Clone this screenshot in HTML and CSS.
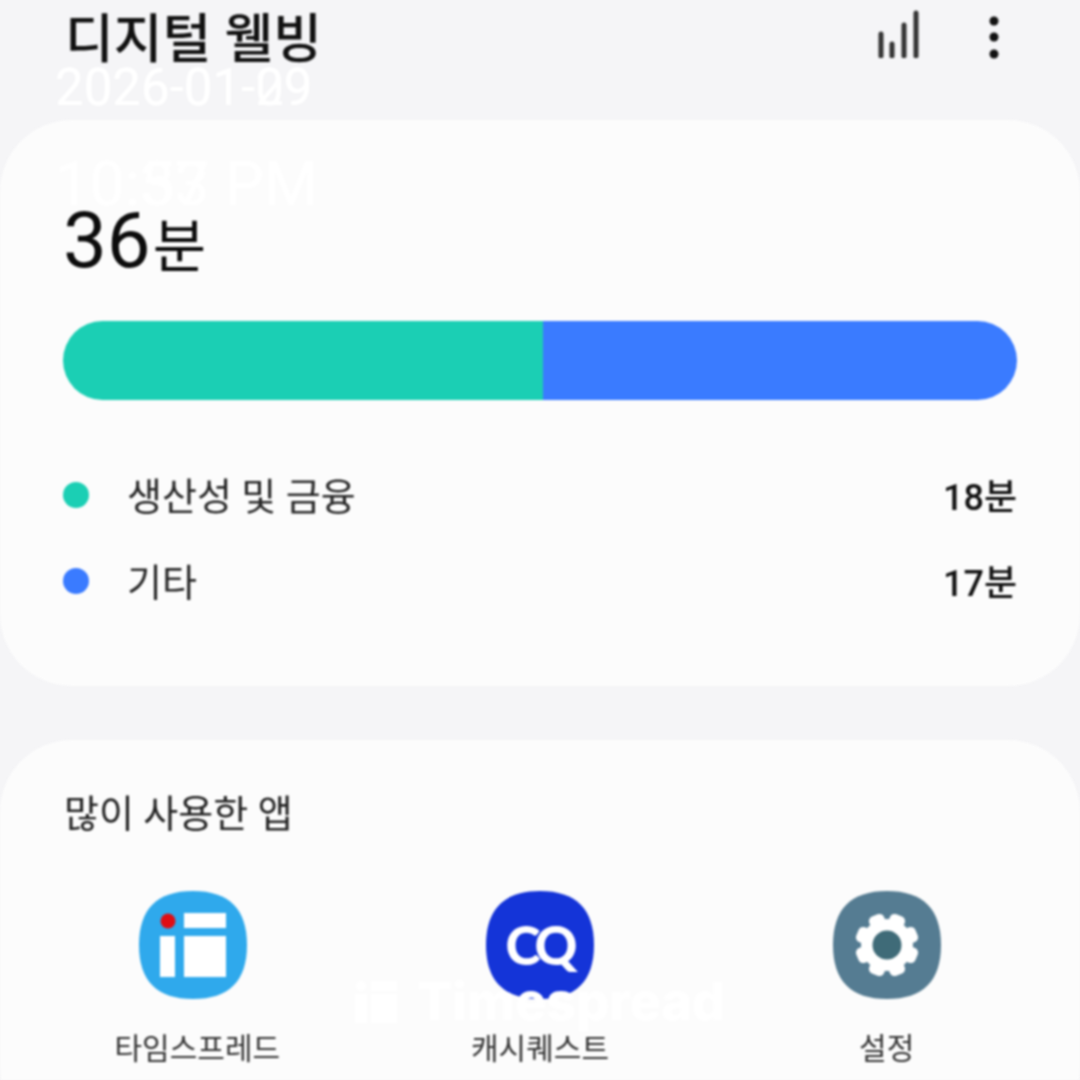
FILE: index.html
```html
<!DOCTYPE html>
<html lang="ko">
<head>
  <meta charset="UTF-8" />
  <meta name="viewport" content="width=device-width, initial-scale=1.0" />
  <title>디지털 웰빙</title>
  <link rel="stylesheet" href="styles.css">
</head>
<body>
  <div class="page">
    <!-- 상단 바 -->
    <header class="top-bar">
      <h1>디지털 웰빙</h1>
      <div class="top-icons">
        <svg class="icon-signal" width="44" height="50" viewBox="0 0 44 50">
          <line x1="5" y1="26" x2="5" y2="48" />
          <line x1="16" y1="36" x2="16" y2="48" />
          <line x1="28" y1="17" x2="28" y2="48" />
          <line x1="40" y1="5" x2="40" y2="48" />
        </svg>
        <svg class="icon-more" width="10" height="44" viewBox="0 0 10 44">
          <circle cx="5" cy="5" r="4.5" />
          <circle cx="5" cy="21" r="4.5" />
          <circle cx="5" cy="38" r="4.5" />
        </svg>
      </div>
    </header>

    <!-- 사용 시간 -->
    <section class="card usage-card">
      <div class="total"><span class="total-num">36</span><span class="total-unit">분</span></div>
      <div class="bar">
        <div class="bar-green"></div>
        <div class="bar-blue"></div>
      </div>
      <ul class="legend">
        <li><i class="dot dot-green"></i><span class="legend-name">생산성 및 금융</span><b class="legend-time">18분</b></li>
        <li><i class="dot dot-blue"></i><span class="legend-name">기타</span><b class="legend-time">17분</b></li>
      </ul>
    </section>

    <!-- 많이 사용한 앱 -->
    <section class="card apps-card">
      <h2>많이 사용한 앱</h2>
      <div class="apps">
        <div class="app">
          <svg width="108" height="108" viewBox="0 0 108 108">
            <path fill="#2fa9ec" d="M54 0C90 0 108 18 108 54S90 108 54 108 0 90 0 54 18 0 54 0Z" />
            <rect fill="#fff" x="45" y="22" width="42" height="15" />
            <rect fill="#fff" x="45" y="45" width="42" height="41" />
            <rect fill="#fff" x="21" y="45" width="15" height="41" />
            <circle fill="#e00d14" cx="29" cy="30" r="7.5" />
          </svg>
          <span class="app-shift">타임스프레드</span>
        </div>
        <div class="app">
          <div class="cq-icon">
            <svg width="108" height="108" viewBox="0 0 108 108">
              <path fill="#1434d8" d="M54 0C90 0 108 18 108 54S90 108 54 108 0 90 0 54 18 0 54 0Z" />
            </svg>
            <span class="cq-text">CQ</span>
          </div>
          <span>캐시퀘스트</span>
        </div>
        <div class="app">
          <svg width="108" height="108" viewBox="0 0 108 108">
            <path fill="#557c92" d="M54 0C90 0 108 18 108 54S90 108 54 108 0 90 0 54 18 0 54 0Z" />
            <g fill="#fff">
              <rect x="46" y="22" width="16" height="64" rx="5" transform="rotate(22.5 54 54)" />
              <rect x="46" y="22" width="16" height="64" rx="5" transform="rotate(67.5 54 54)" />
              <rect x="46" y="22" width="16" height="64" rx="5" transform="rotate(112.5 54 54)" />
              <rect x="46" y="22" width="16" height="64" rx="5" transform="rotate(157.5 54 54)" />
              <circle cx="54" cy="54" r="26" />
            </g>
            <circle fill="#3f6b78" cx="54" cy="54" r="14.5" />
          </svg>
          <span>설정</span>
        </div>
      </div>
    </section>

    <!-- 워터마크 -->
    <div class="stamp stamp-date">2026-01-09<span class="ghost">2026-01-29</span></div>
    <div class="stamp stamp-time">10:53 PM<span class="ghost">10:37 PM</span></div>
    <div class="stamp stamp-logo">
      <svg width="42" height="42" viewBox="0 0 42 42">
        <rect x="0" y="13" width="12" height="29" />
        <circle cx="6" cy="5" r="5" />
        <rect x="16" y="0" width="26" height="10" />
        <rect x="16" y="13" width="26" height="29" />
      </svg>
      Timespread
    </div>
  </div>
</body>
</html>
```

FILE: styles.css
```css
* {
  box-sizing: border-box;
}

body {
  margin: 0;
  font-family: Roboto, "Noto Sans CJK KR", sans-serif;
  background-color: #f5f5f7;
  color: #1c1c1c;
}

.page {
  position: relative;
  width: 1080px;
  height: 1080px;
  overflow: hidden;
  filter: blur(0.8px);
}

.top-bar {
  height: 120px;
  padding: 0 81px 0 65px;
  display: flex;
  justify-content: space-between;
  align-items: flex-start;
}

h1 {
  margin: 10px 0 0;
  font-size: 53px;
  line-height: 60px;
  font-weight: 500;
  color: #111;
}

.top-icons {
  display: flex;
  align-items: flex-start;
  gap: 69px;
  padding-top: 8px;
}

.icon-signal line {
  stroke: #333;
  stroke-width: 5;
  stroke-linecap: round;
}

.icon-more {
  margin-top: 8px;
  fill: #111;
}

.card {
  background-color: #fcfcfc;
  border-radius: 72px;
}

.usage-card {
  height: 566px;
  padding: 82px 63px 0;
  margin-bottom: 54px;
}

.total {
  height: 78px;
  display: flex;
  align-items: baseline;
  color: #0c0c0c;
}

.total-num {
  font-size: 78px;
  line-height: 78px;
}

.total-unit {
  font-size: 58px;
  line-height: 78px;
  margin-left: 2px;
}

.bar {
  display: flex;
  height: 79px;
  margin-top: 41px;
  border-radius: 40px;
  overflow: hidden;
}

.bar-green {
  flex: 480;
  background-color: #1bcfb4;
}

.bar-blue {
  flex: 474;
  background-color: #3a7bff;
}

.legend {
  list-style: none;
  margin: 52px 0 0;
  padding: 0;
}

.legend li {
  height: 86px;
  display: flex;
  align-items: center;
}

.dot {
  width: 26px;
  height: 26px;
  border-radius: 50%;
  margin-right: 38px;
}

.dot-green {
  background-color: #1bcfb4;
}

.dot-blue {
  background-color: #3a7bff;
}

.legend-name {
  flex: 1;
  margin-top: -3px;
  font-size: 38px;
  color: #262626;
}

.legend-time {
  margin-top: -3px;
  font-size: 36px;
  font-weight: 500;
  color: #111;
}

.apps-card {
  height: 400px;
  padding: 48px 20px 0;
}

h2 {
  margin: 0 0 0 44px;
  font-size: 38px;
  line-height: 52px;
  font-weight: 400;
  color: #222;
}

.apps {
  display: grid;
  grid-template-columns: repeat(3, 1fr);
  margin-top: 51px;
}

.app {
  display: flex;
  flex-direction: column;
  align-items: center;
  gap: 28px;
  font-size: 30px;
  line-height: 44px;
  color: #333;
}

.app-shift {
  margin-left: 8px;
}

.cq-icon {
  position: relative;
  width: 108px;
  height: 108px;
}

.cq-text {
  position: absolute;
  left: -2px;
  right: 0;
  top: 24px;
  text-align: center;
  font-family: Lato, sans-serif;
  font-size: 53px;
  line-height: 60px;
  font-weight: 900;
  letter-spacing: -5px;
  color: #fff;
}

.stamp {
  position: absolute;
  color: #fff;
  white-space: nowrap;
}

.ghost {
  position: absolute;
  left: 0;
  top: 0;
}

.stamp-date {
  left: 55px;
  top: 60px;
  font-size: 51px;
  line-height: 56px;
}

.stamp-time {
  left: 55px;
  top: 152px;
  font-size: 62px;
  line-height: 64px;
}

.stamp-logo {
  left: 355px;
  top: 972px;
  display: flex;
  align-items: center;
  gap: 20px;
  font-family: Inter, sans-serif;
  font-size: 52px;
  line-height: 60px;
  font-weight: 800;
}

.stamp-logo svg {
  fill: #fff;
}
```
